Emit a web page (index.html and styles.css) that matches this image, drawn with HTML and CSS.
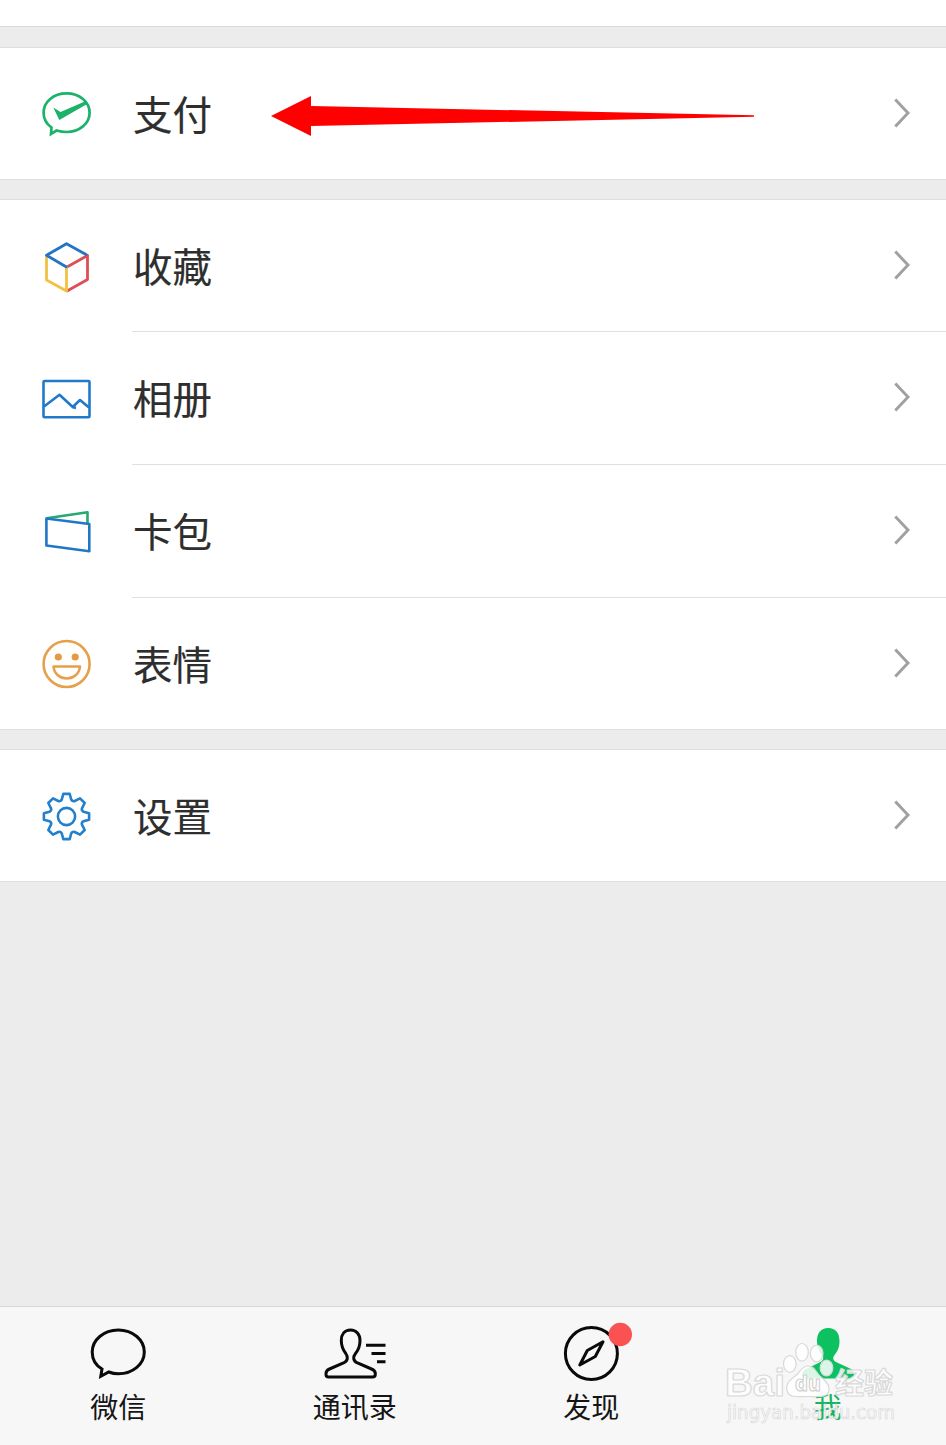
FILE: index.html
```html
<!DOCTYPE html>
<html lang="zh-CN">
<head>
<meta charset="utf-8">
<title>我</title>
<link rel="stylesheet" href="styles.css">
</head>
<body>
<svg class="defs" aria-hidden="true"><symbol id="chevron" viewBox="0 0 20 36"><path d="M3.300 4.500 16 18 3.300 31.500" fill="none" stroke="#a0a0a0" stroke-width="2.900"/></symbol></svg>
<main class="page">
  <div class="top-strip"></div>
  <section class="group">
    <div class="row">
      <svg class="icon" viewBox="38 86 56 55" fill="none" stroke="#1cb269" stroke-width="2.7"><path d="M51.500 127.500 51 134 56.500 130.500C59.500 131.400 63 132 66.500 132 79.500 132 89.600 123.400 89.600 112.700S79.500 93.400 66.500 93.400 43.600 102 43.600 112.700C43.600 118.700 46.600 124 51.500 127.500Z"/><path d="M53.300 107.500 60.500 112 86 101 88 103.500 59.300 120Z" fill="#1cb269" stroke="none"/></svg>
      <span class="label">支付</span>
      <svg class="chev"><use href="#chevron"/></svg>
      <svg class="arrow" viewBox="271 96 484 40"><path d="M271 116 311 96V106L754 115.200V116.800L311 126V136Z" fill="#fe0000"/></svg>
    </div>
  </section>
  <section class="group">
    <div class="row">
      <svg class="icon" viewBox="38 238 56 55" fill="none" stroke-width="2.800" stroke-linejoin="round" stroke-linecap="round"><path d="M87.500 255.500V279.500L67.500 290.800M87.500 255.500 67 267" stroke="#dc5054"/><path d="M46.500 257V280L66.500 291V268" stroke="#f2c043"/><path d="M86 254.500 66.500 243.700 46.500 255.300 66 266.700" stroke="#2275c5"/></svg>
      <span class="label">收藏</span>
      <svg class="chev"><use href="#chevron"/></svg>
    </div>
    <div class="row lined">
      <svg class="icon" viewBox="38 370 56 55" fill="none" stroke="#2179c9" stroke-width="2.600" stroke-linejoin="round"><rect x="43.500" y="381" width="46" height="36.300" rx="1"/><path d="M44 406.500 59.500 394.800 73 407.300 76 408M73 406.800 80 400 89 407.500"/></svg>
      <span class="label">相册</span>
      <svg class="chev"><use href="#chevron"/></svg>
    </div>
    <div class="row lined">
      <svg class="icon" viewBox="38 503 56 55" fill="none" stroke-width="2.600" stroke-linejoin="round"><path d="M46.500 518.300 87.500 512.300V523" stroke="#25aa70"/><path d="M46.400 518.500 89.300 524V551.200L46.400 545.500Z" stroke="#2077c6"/></svg>
      <span class="label">卡包</span>
      <svg class="chev"><use href="#chevron"/></svg>
    </div>
    <div class="row lined">
      <svg class="icon" viewBox="38 636 56 55" fill="none" stroke="#e7a04a" stroke-width="2.600" stroke-linejoin="round"><circle cx="66.600" cy="664" r="23"/><circle cx="58.300" cy="657" r="3.600" fill="#e39a42" stroke="none"/><circle cx="75.200" cy="657" r="3.600" fill="#e39a42" stroke="none"/><path d="M53.500 666.500H80C79.300 674 73.500 678.500 66.700 678.500S54.200 674 53.500 666.500Z"/></svg>
      <span class="label">表情</span>
      <svg class="chev"><use href="#chevron"/></svg>
    </div>
  </section>
  <section class="group">
    <div class="row">
      <svg class="icon" viewBox="-28.500 -28.500 56 55" fill="none" stroke="#2580cc" stroke-width="2.600" stroke-linejoin="round"><path d="M-3.200-22.600H3.200L4.700-17Q6-14.700 8.200-15.500L13.500-18.200 18.200-13.500 15.500-8.200Q14.700-6 17-4.700L22.600-3.200V3.200L17 4.700Q14.700 6 15.500 8.200L18.200 13.500 13.500 18.200 8.200 15.500Q6 14.700 4.700 17L3.200 22.600H-3.200L-4.700 17Q-6 14.700-8.200 15.500L-13.500 18.200-18.200 13.500-15.500 8.200Q-14.700 6-17 4.700L-22.600 3.200V-3.200L-17-4.700Q-14.700-6-15.500-8.200L-18.200-13.500-13.500-18.200-8.200-15.500Q-6-14.700-4.700-17Z"/><circle r="8.600"/></svg>
      <span class="label">设置</span>
      <svg class="chev"><use href="#chevron"/></svg>
    </div>
  </section>
  <div class="filler"></div>
  <nav class="tabs">
    <div class="tab">
      <svg class="tab-icon" viewBox="84 1321 68 60" fill="none" stroke="#0a0a0a" stroke-width="3"><path d="M102 1369 100.800 1376.300 108.800 1372C111.800 1373.200 115 1373.800 118.300 1373.800 133 1373.800 144.300 1364 144.300 1352S133 1330 118.300 1330 92.200 1340 92.200 1352C92.200 1359 96 1365.500 102 1369Z"/></svg>
      <span class="tab-label">微信</span>
    </div>
    <div class="tab">
      <svg class="tab-icon" viewBox="321 1321 68 60" fill="none" stroke="#0a0a0a" stroke-width="3"><path d="M350.500 1330C344.500 1330 341.300 1334.500 341.300 1340.500 341.300 1347 343.500 1350.500 345.800 1353.500 348.500 1357.300 347.800 1361 343.500 1363L329.500 1369Q326 1370.500 326 1373.500V1374.500Q326 1377 328.500 1377H372.500Q375.300 1377 375.300 1374.500V1373.500Q375.300 1370.500 371.500 1369L357.500 1363C353.200 1361 352.500 1357.300 355.500 1353.500 358 1350.500 360 1347 360 1340.500 360 1334.500 356.500 1330 350.500 1330ZM366 1345.300H385.500M371.500 1353.500H385.500M377 1361.700H385.500"/></svg>
      <span class="tab-label">通讯录</span>
    </div>
    <div class="tab">
      <svg class="tab-icon" viewBox="553.200 1321 76 60" fill="none" stroke="#0a0a0a" stroke-width="3"><circle cx="591.600" cy="1353.500" r="26"/><path d="M603.200 1341.800 587.500 1350.500 580 1365 595.500 1356.500Z" stroke-linejoin="round"/><circle cx="620.500" cy="1334.500" r="11.700" fill="#fa5153" stroke="none"/></svg>
      <span class="tab-label">发现</span>
    </div>
    <div class="tab active">
      <svg class="tab-icon" viewBox="794 1321 68 60" fill="#0dc160"><path d="M828.200 1328C821 1328 817 1333 817 1341 817 1348 819.300 1351.500 822 1355 824.300 1358.300 823.500 1360.500 819.500 1362.500L806 1369Q802.500 1370.500 802.500 1374V1375.500Q802.500 1378.500 805.500 1378.500H851Q854 1378.500 854 1375.500V1374Q854 1370.500 850 1368.500L837 1362.500C833 1360.500 832.300 1358.300 834.500 1355 837.300 1351.500 839.500 1348 839.500 1341 839.500 1333 835.500 1328 828.200 1328Z"/></svg>
      <span class="tab-label">我</span>
    </div>
  </nav>
  <svg class="watermark" viewBox="720 1340 180 90">
    <g fill="#fff" fill-opacity=".85" stroke="#d9d9d9" stroke-width="1.200" stroke-linejoin="round">
      <ellipse cx="789.800" cy="1364" rx="6.300" ry="8.300"/><ellipse cx="802" cy="1352.300" rx="6.300" ry="8.800"/><ellipse cx="816.700" cy="1353.500" rx="6.300" ry="8.300"/><ellipse cx="826.500" cy="1368" rx="6.300" ry="8"/>
      <path d="M808 1366C801 1366 800 1373 794 1377 788 1381 785 1386 787.500 1392 790 1398 798 1396.500 808 1396.500 818 1396.500 826 1398 828.500 1392 831 1386 826 1381 821 1377 816 1373 815 1366 808 1366Z"/>
      <g class="wm-bold"><text x="725" y="1396" font-size="38" textLength="60" lengthAdjust="spacingAndGlyphs">Bai</text></g>
      <text class="wm-du" x="795" y="1391" font-size="21" textLength="26" lengthAdjust="spacingAndGlyphs">du</text>
      <text class="wm-cjk" x="835" y="1394" font-size="29">经验</text>
    </g>
    <text class="wm-url" x="727" y="1419" font-size="19" textLength="168" lengthAdjust="spacingAndGlyphs">jingyan.baidu.com</text>
  </svg>
</main>
</body>
</html>
```

FILE: styles.css
```css
* { box-sizing: border-box; }
body { margin: 0; background: #ececec; font-family: "Noto Sans CJK SC", sans-serif; }
.defs { position: absolute; width: 0; height: 0; }
.page { position: relative; display: flex; flex-direction: column; width: 946px; height: 1445px; overflow: hidden; }
.top-strip { height: 27px; margin-bottom: 20px; background: #fff; border-bottom: 1px solid #dadada; }
.group { background: #fff; border: solid #dedede; border-width: 1px 0; margin-bottom: 19px; }
.row { position: relative; display: flex; align-items: flex-start; height: 131px; padding: 38px 34px 0 38px; }
.row.lined { height: 133px; padding-top: 39px; }
.row.lined:last-child { height: 132px; }
.row.lined::before { content: ""; position: absolute; left: 132px; right: 0; top: 0; height: 1px; background: #e0e0e0; }
.icon { flex: none; width: 56px; height: 55px; }
.label { margin-left: 39px; font-size: 39.5px; line-height: 54px; color: #2e2e2e; -webkit-text-stroke: .15px #2e2e2e; }
.chev { width: 20px; height: 36px; margin: 9px 0 0 auto; }
.arrow { position: absolute; left: 271px; top: 48px; width: 484px; height: 40px; }
.filler { flex: 1; }
.tabs { display: grid; grid-template-columns: repeat(4, 1fr); height: 139px; background: #f7f7f7; border-top: 1px solid #d8d8d8; }
.tab { display: flex; flex-direction: column; align-items: center; padding-top: 14px; color: #151515; }
.tab-icon { height: 60px; width: 76px; overflow: visible; }
.tab-label { font-size: 28px; line-height: 40px; margin-top: 5px; }
.active { color: #16b55f; }
.watermark { position: absolute; left: 720px; top: 1340px; width: 180px; height: 90px; overflow: visible; }
.wm-bold { font-family: "Liberation Sans", sans-serif; font-weight: 700; }
.wm-du { font-family: "DejaVu Sans", sans-serif; font-weight: 700; stroke: #cecece; }
.wm-cjk { font-weight: 700; }
.wm-url { font-family: "DejaVu Sans", sans-serif; fill: #fff; fill-opacity: .9; stroke: #d8d8d8; stroke-width: .7; }
```
